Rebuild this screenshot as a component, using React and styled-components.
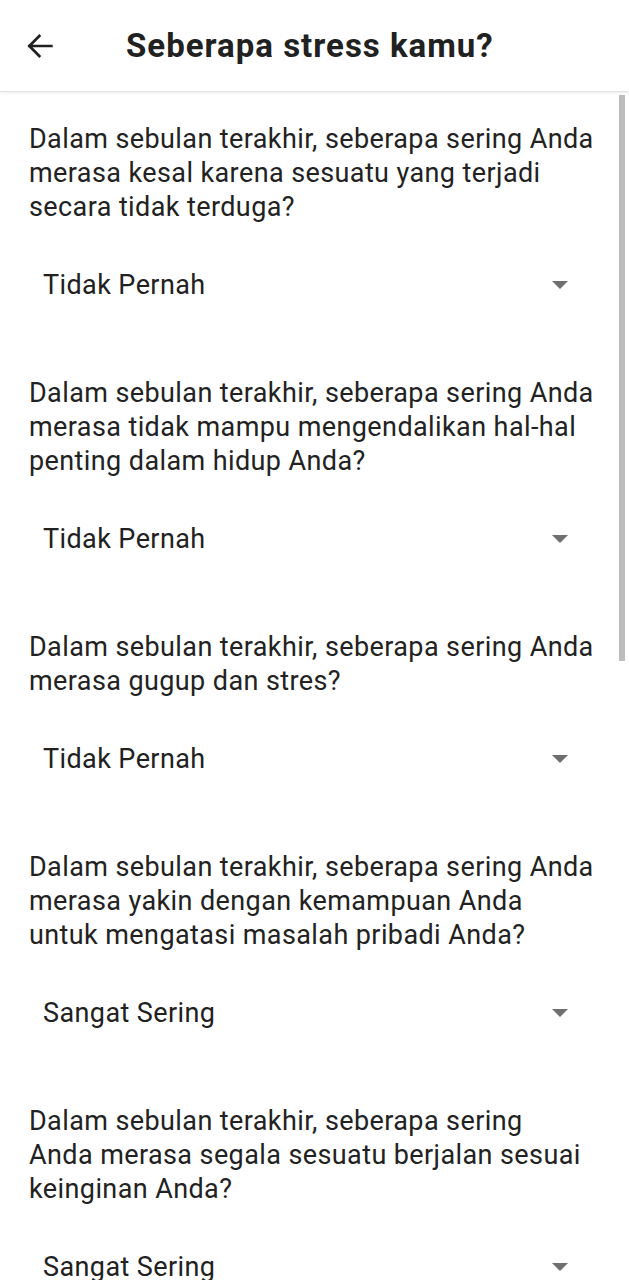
import React from 'react';
import styled, { createGlobalStyle } from 'styled-components';

const GlobalStyle = createGlobalStyle`
  html, body {
    margin: 0;
    padding: 0;
    background: #ffffff;
    font-family: Roboto, "Noto Sans", "Liberation Sans", sans-serif;
  }
`
const StyledApp = styled.div`
  width: 100%;
  min-height: 100vh;
  background-color: #ffffff;
  color: #212121;
  position: relative;
  overflow: hidden;
`
const StyledHeader = styled.div`
  height: 91px;
  display: flex;
  align-items: center;
  background-color: #ffffff;
  border-bottom: 1px solid #e4e4e4;
  box-shadow: 0 1px 3px rgba(0, 0, 0, 0.08);
  position: relative;
  z-index: 1;
`
const StyledBack = styled.div`
  width: 126px;
  padding-left: 24px;
  box-sizing: border-box;
  display: flex;
  align-items: center;
  color: #212121;
`
const StyledTitle = styled.h1`
  margin: 0;
  font-size: 33px;
  font-weight: 700;
  color: #212121;
  letter-spacing: 1px;
`
const StyledList = styled.div`
  display: flex;
  flex-direction: column;
  gap: 63px;
  padding: 30px 34px 40px 29px;
`
const StyledQuestion = styled.div`
  display: flex;
  flex-direction: column;
  gap: 33px;
`
const StyledText = styled.p`
  margin: 0;
  font-size: 27px;
  line-height: 34px;
  letter-spacing: 0.4px;
  color: #222222;
  white-space: nowrap;
`
const StyledSelect = styled.div`
  height: 56px;
  display: flex;
  align-items: center;
  justify-content: space-between;
  padding: 0 27px 0 14px;
  font-size: 27px;
  letter-spacing: 0.4px;
  color: #212121;
`
const StyledCaret = styled.span`
  width: 0;
  height: 0;
  border-left: 8px solid transparent;
  border-right: 8px solid transparent;
  border-top: 8px solid #6f6f6f;
`
const StyledScrollbar = styled.div`
  position: absolute;
  top: 95px;
  right: 4px;
  width: 6px;
  height: 566px;
  background-color: #bdbdbd;
`

const questions = [
  {
    lines: ['Dalam sebulan terakhir, seberapa sering Anda', 'merasa kesal karena sesuatu yang terjadi', 'secara tidak terduga?'],
    answer: 'Tidak Pernah'
  },
  {
    lines: ['Dalam sebulan terakhir, seberapa sering Anda', 'merasa tidak mampu mengendalikan hal-hal', 'penting dalam hidup Anda?'],
    answer: 'Tidak Pernah'
  },
  {
    lines: ['Dalam sebulan terakhir, seberapa sering Anda', 'merasa gugup dan stres?'],
    answer: 'Tidak Pernah'
  },
  {
    lines: ['Dalam sebulan terakhir, seberapa sering Anda', 'merasa yakin dengan kemampuan Anda', 'untuk mengatasi masalah pribadi Anda?'],
    answer: 'Sangat Sering'
  },
  {
    lines: ['Dalam sebulan terakhir, seberapa sering', 'Anda merasa segala sesuatu berjalan sesuai', 'keinginan Anda?'],
    answer: 'Sangat Sering'
  }
];

function App() {
  return (
    <StyledApp>
      <GlobalStyle />
      <StyledHeader>
        <StyledBack>
          <svg width="32" height="32" viewBox="0 0 24 24" fill="none" stroke="#212121" strokeWidth="2" strokeLinecap="square">
            <path d="M20.5 12H4M11.5 4.5L4 12l7.5 7.5" />
          </svg>
        </StyledBack>
        <StyledTitle>Seberapa stress kamu?</StyledTitle>
      </StyledHeader>
      <StyledList>
        {questions.map((q, i) => (
          <StyledQuestion key={i}>
            <StyledText>
              {q.lines.map((line, j) => (
                <React.Fragment key={j}>
                  {j > 0 && <br />}
                  {line}
                </React.Fragment>
              ))}
            </StyledText>
            <StyledSelect>
              <span>{q.answer}</span>
              <StyledCaret />
            </StyledSelect>
          </StyledQuestion>
        ))}
      </StyledList>
      <StyledScrollbar />
    </StyledApp>
  );
}

export default App;
